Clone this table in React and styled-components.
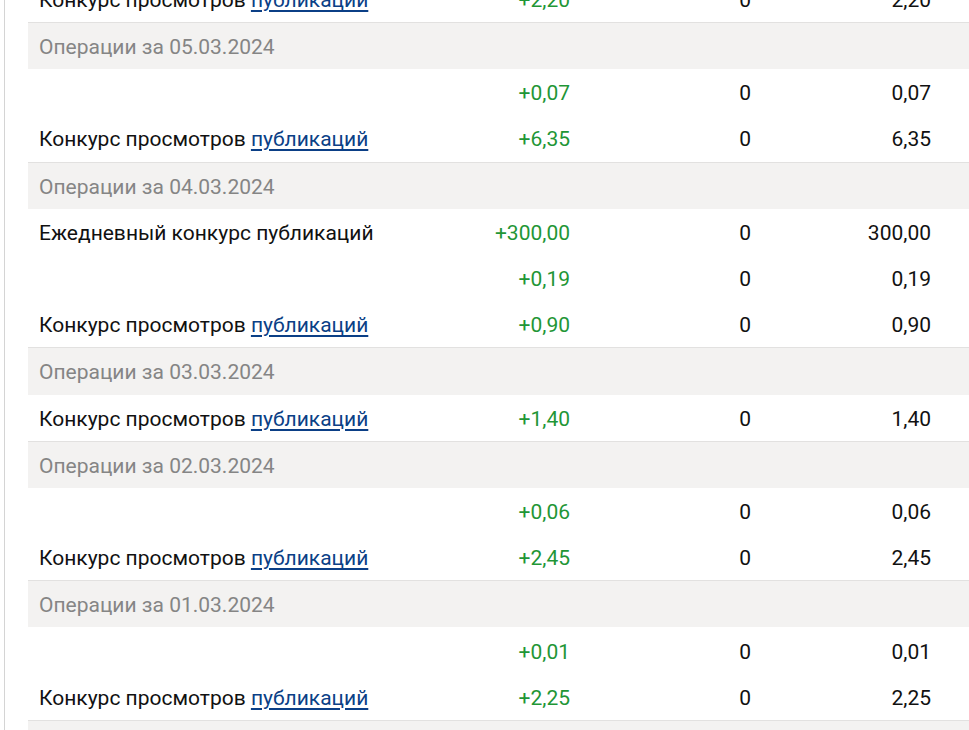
import React from "react";
import styled, { createGlobalStyle } from "styled-components";

const Global = createGlobalStyle`
  html, body { margin: 0; padding: 0; background: #fff; overflow: hidden; }
  body { font-family: Roboto, "Liberation Sans", Arial, sans-serif; }
`;

const Page = styled.div`
  padding-left: 4px;
  height: 730px;
  overflow: hidden;
`;

const Panel = styled.div`
  border-left: 1px solid #d4d4d4;
  padding-left: 23px;
  height: 100%;
  overflow: hidden;
`;

const Table = styled.div`
  width: 1000px;
  margin-top: -24.2px;
  font-size: 21px;
  color: #1a1a1a;
`;

const Row = styled.div`
  display: grid;
  grid-template-columns: 400px 154px 181px 180px 1fr;
  height: 46.2px;
  align-items: center;
`;

const GroupHeader = styled.div`
  height: 44.2px;
  padding-top: 2px;
  display: flex;
  align-items: center;
  padding-left: 11px;
  background: #f3f2f1;
  border-top: 1px solid #e2e1e0;
  color: #858585;
`;

const Cell = styled.div`
  padding: 2px 12px 0 ${(p) => (p.$right ? "12px" : "11px")};
  text-align: ${(p) => (p.$right ? "right" : "left")};
  color: ${(p) => (p.$green ? "#1f9636" : "#111")};
  white-space: nowrap;
`;

const Link = styled.a`
  color: #0b3f86;
  text-decoration: underline;
  text-decoration-thickness: 2px;
  text-underline-offset: 3px;
`;

const groups = [
  { date: null, rows: [{ t: "link", a: "+2,20", b: "0", c: "2,20" }] },
  {
    date: "05.03.2024",
    rows: [
      { t: "", a: "+0,07", b: "0", c: "0,07" },
      { t: "link", a: "+6,35", b: "0", c: "6,35" },
    ],
  },
  {
    date: "04.03.2024",
    rows: [
      { t: "daily", a: "+300,00", b: "0", c: "300,00" },
      { t: "", a: "+0,19", b: "0", c: "0,19" },
      { t: "link", a: "+0,90", b: "0", c: "0,90" },
    ],
  },
  { date: "03.03.2024", rows: [{ t: "link", a: "+1,40", b: "0", c: "1,40" }] },
  {
    date: "02.03.2024",
    rows: [
      { t: "", a: "+0,06", b: "0", c: "0,06" },
      { t: "link", a: "+2,45", b: "0", c: "2,45" },
    ],
  },
  {
    date: "01.03.2024",
    rows: [
      { t: "", a: "+0,01", b: "0", c: "0,01" },
      { t: "link", a: "+2,25", b: "0", c: "2,25" },
    ],
  },
  { date: "29.02.2024", rows: [] },
];

function Desc({ t }) {
  if (t === "link")
    return (
      <>
        Конкурс просмотров <Link href="#">публикаций</Link>
      </>
    );
  if (t === "daily") return <>Ежедневный конкурс публикаций</>;
  return null;
}

export default function App() {
  return (
    <>
      <Global />
      <Page>
        <Panel>
          <Table>
            {groups.map((g, i) => (
              <React.Fragment key={i}>
                {g.date && <GroupHeader>Операции за {g.date}</GroupHeader>}
                {g.rows.map((r, j) => (
                  <Row key={j}>
                    <Cell>
                      <Desc t={r.t} />
                    </Cell>
                    <Cell $right $green>
                      {r.a}
                    </Cell>
                    <Cell $right>{r.b}</Cell>
                    <Cell $right>{r.c}</Cell>
                    <Cell />
                  </Row>
                ))}
              </React.Fragment>
            ))}
          </Table>
        </Panel>
      </Page>
    </>
  );
}
